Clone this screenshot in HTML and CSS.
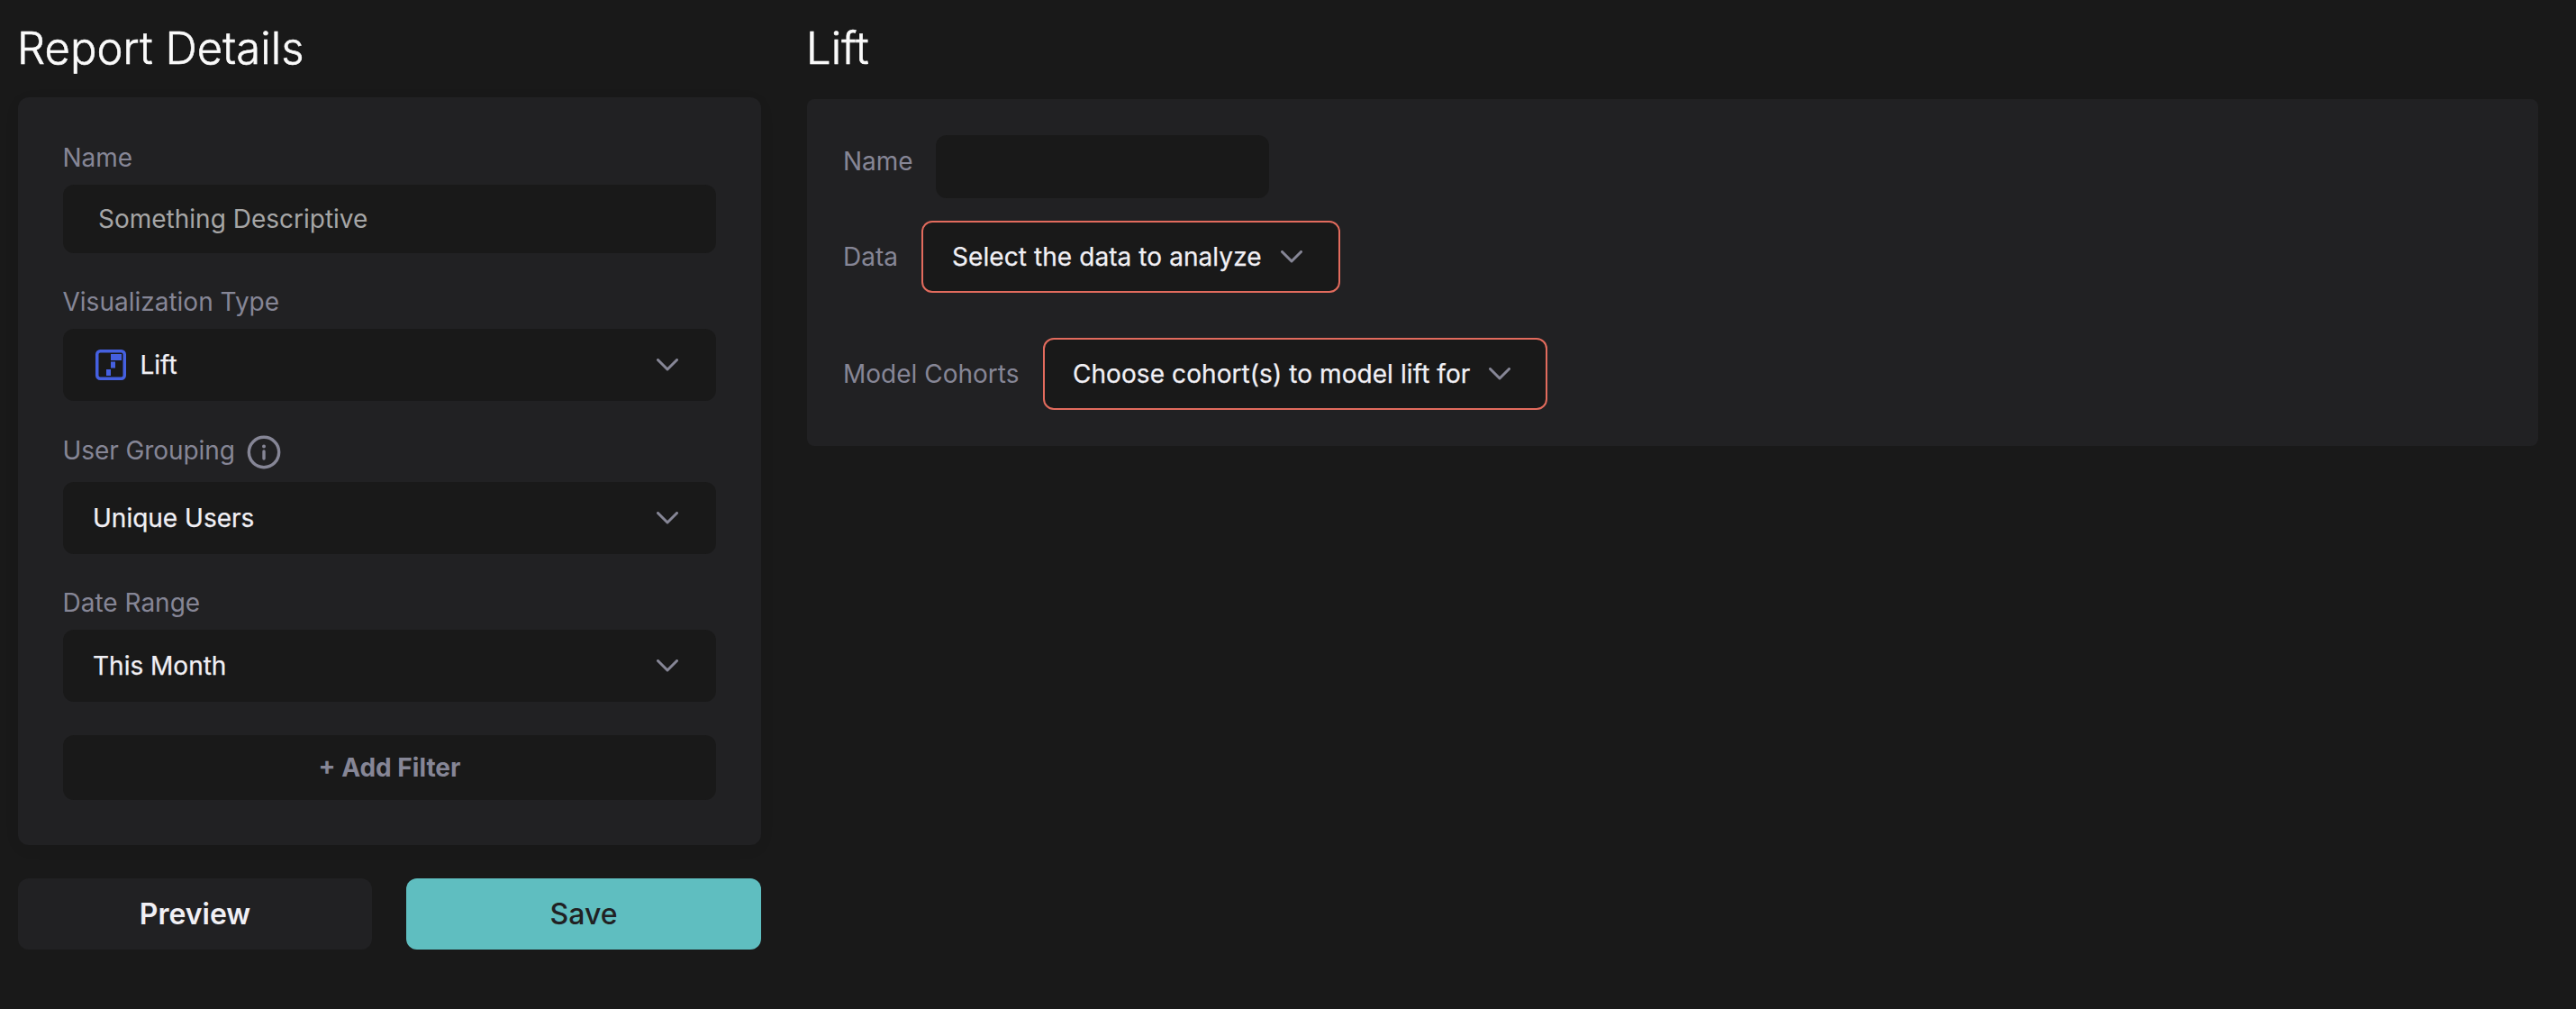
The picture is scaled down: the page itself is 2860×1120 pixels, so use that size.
FILE: index.html
```html
<!DOCTYPE html>
<html lang="en">
<head>
<meta charset="utf-8">
<title>Report Details</title>
<link rel="stylesheet" href="styles.css">
</head>
<body>
<main class="page">
  <section class="details">
    <h1 class="title">Report Details</h1>
    <div class="card details-card">
      <label class="label label-name">Name</label>
      <input class="input" type="text" placeholder="Something Descriptive">
      <label class="label label-type">Visualization Type</label>
      <div class="select">
        <svg class="type-icon" width="34" height="34" viewBox="0 0 34 34"><rect x="1.75" y="1.75" width="30.5" height="30.5" rx="3.5" fill="none" stroke="#4560e0" stroke-width="3.5"/><path fill="#4560e0" d="M17 5h12v7H17zM17 13.5h5v7h-5zM12 22h5v7h-5z"/></svg>
        <span class="value">Lift</span>
        <svg class="chevron" width="24" height="14" viewBox="0 0 24 14"><path d="M1.5 1.5 12 12 22.5 1.5"/></svg>
      </div>
      <div class="label label-group"><span class="group-text">User Grouping</span>
        <svg class="info" width="38" height="38" viewBox="0 0 38 38"><circle cx="19" cy="19" r="16.7"/><path d="M19 18v8"/><circle class="dot" cx="19" cy="12.5" r="2"/></svg>
      </div>
      <div class="select"><span class="value">Unique Users</span>
        <svg class="chevron" width="24" height="14" viewBox="0 0 24 14"><path d="M1.5 1.5 12 12 22.5 1.5"/></svg>
      </div>
      <label class="label label-date">Date Range</label>
      <div class="select"><span class="value">This Month</span>
        <svg class="chevron" width="24" height="14" viewBox="0 0 24 14"><path d="M1.5 1.5 12 12 22.5 1.5"/></svg>
      </div>
      <button class="add-filter">+ Add Filter</button>
    </div>
    <div class="actions">
      <button class="button">Preview</button>
      <button class="button save">Save</button>
    </div>
  </section>
  <section class="lift">
    <h1 class="title">Lift</h1>
    <div class="card lift-card">
      <div class="row row-name"><label class="label">Name</label><input class="input lift-name" type="text"></div>
      <div class="row row-data"><label class="label">Data</label>
        <div class="select required data-select"><span class="value">Select the data to analyze</span>
          <svg class="chevron" width="24" height="14" viewBox="0 0 24 14"><path d="M1.5 1.5 12 12 22.5 1.5"/></svg></div>
      </div>
      <div class="row row-model"><label class="label">Model Cohorts</label>
        <div class="select required model-select"><span class="value">Choose cohort(s) to model lift for</span>
          <svg class="chevron" width="24" height="14" viewBox="0 0 24 14"><path d="M1.5 1.5 12 12 22.5 1.5"/></svg></div>
      </div>
    </div>
  </section>
</main>
</body>
</html>
```
FILE: styles.css
```css
* { box-sizing: border-box; }
body {
  margin: 0;
  background: #191919;
  color: #f1f0f5;
  font-family: Inter, "Liberation Sans", sans-serif;
  font-size: 28px;
  line-height: 34px;
}
.page { display: flex; gap: 51px; height: 1120px; padding: 0 42px 0 20px; }
.details { width: 825px; }
.lift { flex: 1; }
.title {
  margin: 0 0 0 -1px;
  padding-top: 24px;
  height: 108px;
  font-size: 49px;
  line-height: 60px;
  font-weight: 300;
  letter-spacing: .05px;
  -webkit-text-stroke: .6px #fafafa;
  color: #fafafa;
}
.card { background: #212123; border-radius: 12px; }
.details-card {
  display: flex;
  flex-direction: column;
  height: 830px;
  padding: 50px;
  box-shadow: 0 4px 20px rgba(0, 0, 0, .04);
}
.label { color: #868696; }
.details .label { margin-left: -.5px; }
.label-name { height: 47px; }
.label-type { height: 84px; padding-top: 37px; }
.label-group { display: flex; align-items: center; gap: 13px; height: 90px; padding-top: 23px; }
.group-text { padding-bottom: 3px; letter-spacing: -.08px; }
.label-date { height: 84px; padding-top: 37px; }
.input {
  height: 76px;
  padding: 0 39px;
  border: 0;
  border-radius: 12px;
  background: #191919;
  color: #f1f0f5;
  font: inherit;
}
.input::placeholder { color: #a6a6a6; opacity: 1; }
.select {
  display: flex;
  align-items: center;
  height: 80px;
  padding: 0 42px 0 33px;
  border-radius: 12px;
  background: #191919;
}
.value { -webkit-text-stroke: .25px #f1f0f5; }
.type-icon { margin: 0 15.5px 0 3px; }
.chevron { margin-left: auto; fill: none; stroke: #868696; stroke-width: 3; stroke-linecap: round; stroke-linejoin: round; }
.info { fill: none; stroke: #868696; stroke-width: 3.4; stroke-linecap: round; }
.info .dot { fill: #868696; stroke: none; }
.add-filter {
  height: 72px;
  margin-top: 37px;
  border: 0;
  border-radius: 12px;
  background: #191919;
  color: #868696;
  font: inherit;
  font-weight: 700;
}
.actions { display: grid; grid-template-columns: 393px 394px; gap: 38px; margin-top: 37px; }
.button {
  height: 79px;
  border: 0;
  border-radius: 12px;
  background: #212123;
  color: #f1f0f5;
  font: inherit;
  font-size: 32px;
  font-weight: 600;
}
.save { background: #5fbec0; color: #212123; font-weight: 500; }
.lift .title { height: 110px; }
.lift-card { height: 385px; padding: 40px; border-radius: 8px; }
.row { display: flex; align-items: center; }
.row-name { height: 70px; gap: 25px; }
.row-name .label { padding-bottom: 12px; }
.lift-name { width: 370px; height: 70px; }
.row-data { margin-top: 25px; gap: 26px; }
.row-model { margin-top: 50px; gap: 26.5px; }
.required { border: 2px solid #e26b5d; padding: 0 40px 0 32px; }
.required .value { white-space: nowrap; letter-spacing: .08px; }
.data-select { width: 465px; }
.model-select { width: 560px; padding: 0 39px 0 31px; }
```
